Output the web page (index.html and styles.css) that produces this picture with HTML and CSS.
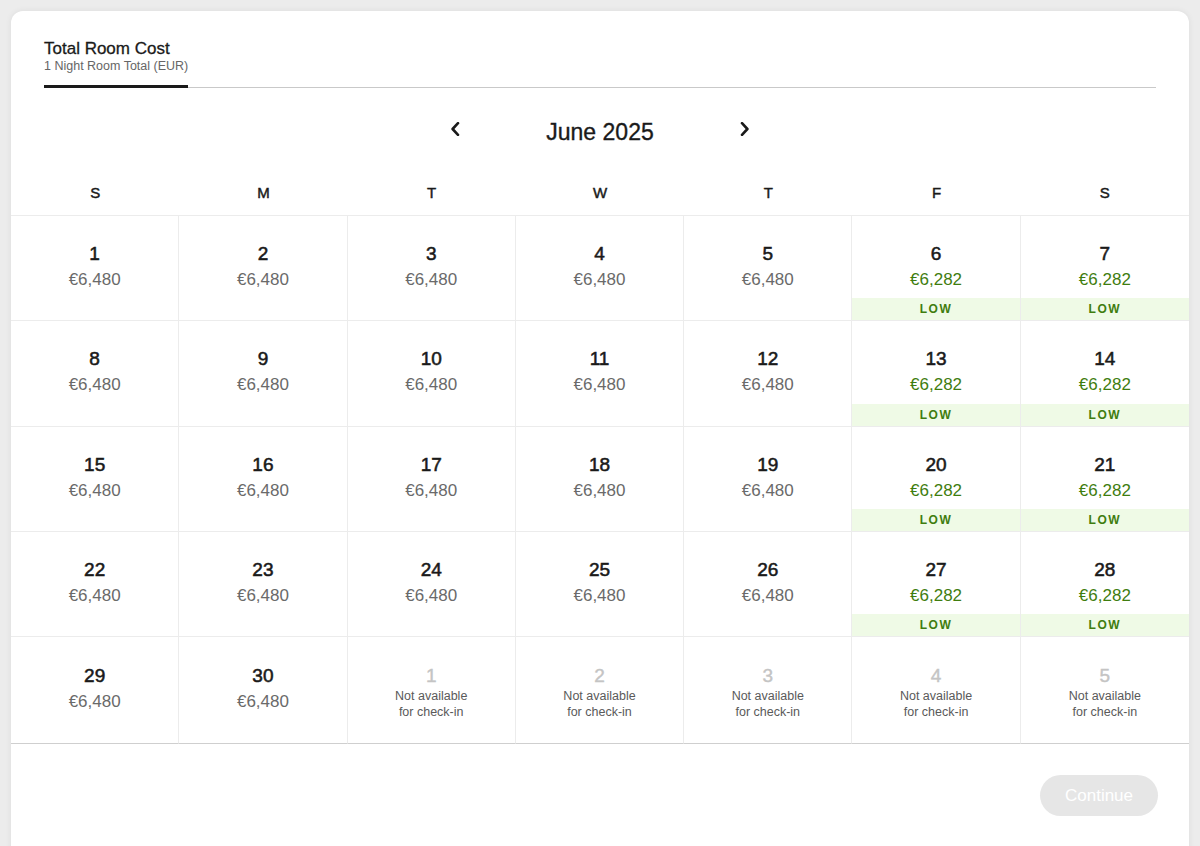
FILE: index.html
```html
<!DOCTYPE html>
<html lang="en">
<head>
<meta charset="utf-8">
<title>Total Room Cost</title>
<link rel="stylesheet" href="styles.css">
</head>
<body>
<div class="card">
  <div class="header">
    <div class="tabs">
      <div class="tab">
        <div class="tab-title">Total Room Cost</div>
        <div class="tab-sub">1 Night Room Total (EUR)</div>
      </div>
    </div>
  </div>

  <div class="nav">
    <button class="nav-btn" aria-label="Previous month">
      <svg width="10" height="14" viewBox="0 0 10 14"><path d="M8 1.2 L2.6 7 L8 12.8" fill="none" stroke="#1a1a1a" stroke-width="2.6" stroke-linecap="round" stroke-linejoin="round"/></svg>
    </button>
    <div class="month">June 2025</div>
    <button class="nav-btn" aria-label="Next month">
      <svg width="10" height="14" viewBox="0 0 10 14"><path d="M2 1.2 L7.4 7 L2 12.8" fill="none" stroke="#1a1a1a" stroke-width="2.6" stroke-linecap="round" stroke-linejoin="round"/></svg>
    </button>
  </div>

  <div class="weekdays">
    <div>S</div><div>M</div><div>T</div><div>W</div><div>T</div><div>F</div><div>S</div>
  </div>

  <div class="grid">
    <div class="cell"><div class="num">1</div><div class="price">€6,480</div></div>
    <div class="cell"><div class="num">2</div><div class="price">€6,480</div></div>
    <div class="cell"><div class="num">3</div><div class="price">€6,480</div></div>
    <div class="cell"><div class="num">4</div><div class="price">€6,480</div></div>
    <div class="cell"><div class="num">5</div><div class="price">€6,480</div></div>
    <div class="cell"><div class="num">6</div><div class="price low-price">€6,282</div><div class="low">LOW</div></div>
    <div class="cell"><div class="num">7</div><div class="price low-price">€6,282</div><div class="low">LOW</div></div>

    <div class="cell"><div class="num">8</div><div class="price">€6,480</div></div>
    <div class="cell"><div class="num">9</div><div class="price">€6,480</div></div>
    <div class="cell"><div class="num">10</div><div class="price">€6,480</div></div>
    <div class="cell"><div class="num">11</div><div class="price">€6,480</div></div>
    <div class="cell"><div class="num">12</div><div class="price">€6,480</div></div>
    <div class="cell"><div class="num">13</div><div class="price low-price">€6,282</div><div class="low">LOW</div></div>
    <div class="cell"><div class="num">14</div><div class="price low-price">€6,282</div><div class="low">LOW</div></div>

    <div class="cell"><div class="num">15</div><div class="price">€6,480</div></div>
    <div class="cell"><div class="num">16</div><div class="price">€6,480</div></div>
    <div class="cell"><div class="num">17</div><div class="price">€6,480</div></div>
    <div class="cell"><div class="num">18</div><div class="price">€6,480</div></div>
    <div class="cell"><div class="num">19</div><div class="price">€6,480</div></div>
    <div class="cell"><div class="num">20</div><div class="price low-price">€6,282</div><div class="low">LOW</div></div>
    <div class="cell"><div class="num">21</div><div class="price low-price">€6,282</div><div class="low">LOW</div></div>

    <div class="cell"><div class="num">22</div><div class="price">€6,480</div></div>
    <div class="cell"><div class="num">23</div><div class="price">€6,480</div></div>
    <div class="cell"><div class="num">24</div><div class="price">€6,480</div></div>
    <div class="cell"><div class="num">25</div><div class="price">€6,480</div></div>
    <div class="cell"><div class="num">26</div><div class="price">€6,480</div></div>
    <div class="cell"><div class="num">27</div><div class="price low-price">€6,282</div><div class="low">LOW</div></div>
    <div class="cell"><div class="num">28</div><div class="price low-price">€6,282</div><div class="low">LOW</div></div>

    <div class="cell last"><div class="num">29</div><div class="price">€6,480</div></div>
    <div class="cell last"><div class="num">30</div><div class="price">€6,480</div></div>
    <div class="cell last na"><div class="num">1</div><div class="na-text">Not available<br>for check-in</div></div>
    <div class="cell last na"><div class="num">2</div><div class="na-text">Not available<br>for check-in</div></div>
    <div class="cell last na"><div class="num">3</div><div class="na-text">Not available<br>for check-in</div></div>
    <div class="cell last na"><div class="num">4</div><div class="na-text">Not available<br>for check-in</div></div>
    <div class="cell last na"><div class="num">5</div><div class="na-text">Not available<br>for check-in</div></div>
  </div>

  <div class="footer">
    <button class="continue" disabled>Continue</button>
  </div>
</div>
</body>
</html>
```

FILE: styles.css
```css
* { box-sizing: border-box; }

html, body {
  margin: 0;
  padding: 0;
  height: 100%;
  overflow: hidden;
}

body {
  background: #ececec;
  font-family: "Liberation Sans", Arial, sans-serif;
  color: #1a1a1a;
}

.card {
  margin: 11px 11px 0;
  background: #ffffff;
  border-radius: 12px 12px 0 0;
  min-height: 900px;
  box-shadow: 0 0 6px rgba(0, 0, 0, 0.07);
}

.header {
  padding: 28px 33px 0;
}

.tabs {
  display: flex;
  border-bottom: 1px solid #c9c9c9;
}

.tab {
  padding-bottom: 11px;
  border-bottom: 3px solid #1a1a1a;
  margin-bottom: -1px;
}

.tab-title {
  font-size: 17px;
  line-height: 19px;
  color: #1a1a1a;
  -webkit-text-stroke: 0.3px #1a1a1a;
}

.tab-sub {
  font-size: 12.5px;
  line-height: 16px;
  color: #666666;
}

.nav {
  width: 320px;
  margin: 20px auto 0;
  height: 48px;
  display: grid;
  grid-template-columns: 30px 1fr 30px;
  align-items: center;
}

.nav-btn {
  border: 0;
  background: transparent;
  padding: 0;
  height: 30px;
  display: flex;
  align-items: center;
  justify-content: center;
  margin-top: -7px;
  cursor: pointer;
}

.month {
  text-align: center;
  font-size: 23px;
  line-height: 28px;
  color: #1a1a1a;
  -webkit-text-stroke: 0.35px #1a1a1a;
}

.weekdays {
  display: grid;
  grid-template-columns: repeat(7, 1fr);
  margin-top: 14px;
  height: 46px;
  padding-bottom: 1px;
  align-items: center;
  text-align: center;
  font-size: 15px;
  color: #1a1a1a;
  -webkit-text-stroke: 0.45px #1a1a1a;
  border-bottom: 1px solid #ececec;
}

.grid {
  display: grid;
  grid-template-columns: repeat(7, 1fr);
  grid-template-rows: 105px 106px 105px 105px 107px;
}

.cell {
  position: relative;
  display: flex;
  flex-direction: column;
  align-items: center;
  padding-top: 27px;
  border-right: 1px solid #ececec;
  border-bottom: 1px solid #ececec;
  text-align: center;
}

.cell:nth-child(7n) {
  border-right: 0;
}

.cell.last {
  padding-top: 28px;
  border-bottom: 1px solid #cfcfcf;
}

.num {
  font-size: 19px;
  line-height: 22px;
  color: #1a1a1a;
  -webkit-text-stroke: 0.55px #1a1a1a;
}

.price {
  margin-top: 5px;
  font-size: 17px;
  line-height: 20px;
  color: #6a6a6a;
}

.low-price {
  color: #3f7d0f;
}

.low {
  margin-top: auto;
  align-self: stretch;
  height: 22px;
  line-height: 22px;
  background: #effae6;
  color: #3f7d0f;
  font-size: 12px;
  font-weight: 700;
  letter-spacing: 1.6px;
}

.na .num {
  color: #c4c4c4;
  -webkit-text-stroke: 0.4px #c4c4c4;
}

.na-text {
  margin-top: 1px;
  font-size: 12.5px;
  line-height: 16px;
  color: #5a5a5a;
}

.footer {
  display: flex;
  justify-content: flex-end;
  padding: 31px 31px 0;
}

.continue {
  width: 118px;
  height: 41px;
  border: 0;
  border-radius: 21px;
  background: #e6e6e6;
  color: #ffffff;
  font-family: "Liberation Sans", Arial, sans-serif;
  font-size: 17px;
}
```
